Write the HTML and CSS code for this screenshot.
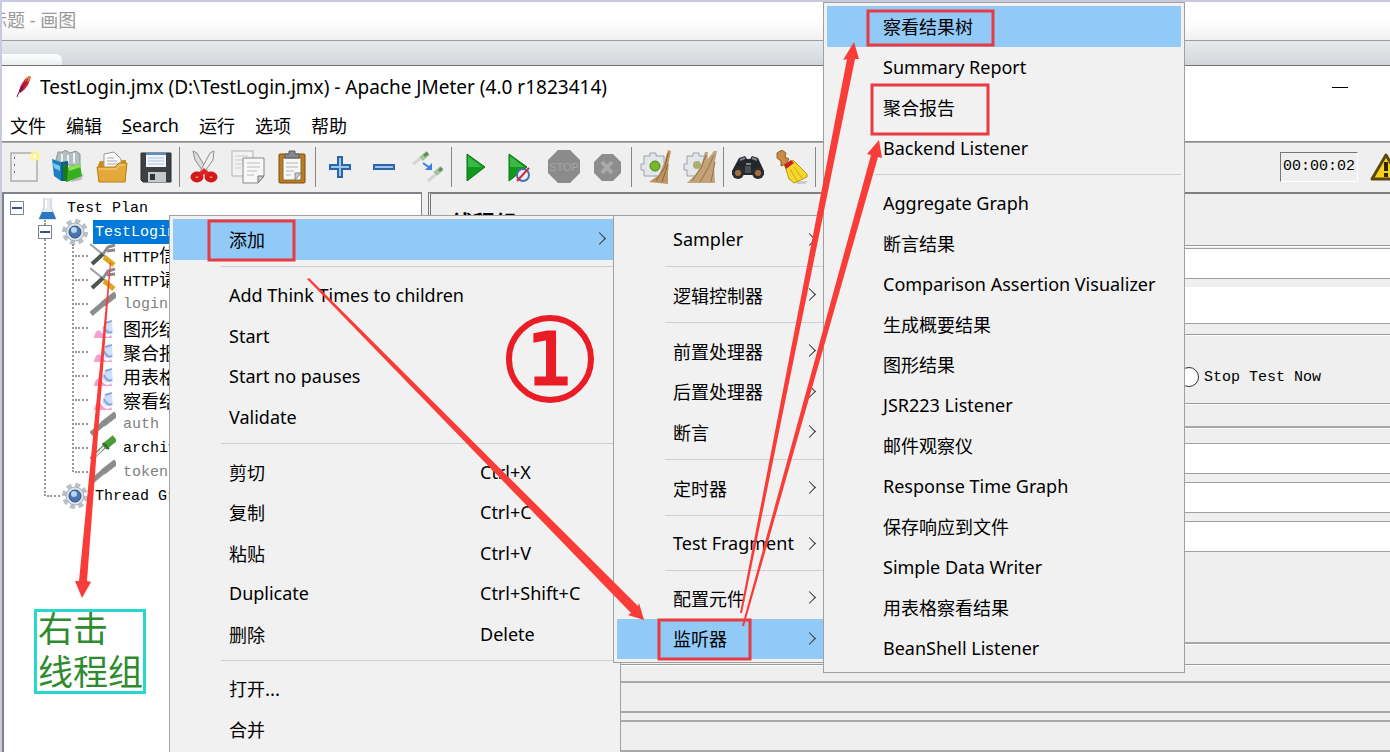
FILE: index.html
```
<!DOCTYPE html>
<html lang="zh-CN">
<head>
    <meta charset="UTF-8">
    <meta name="viewport" content="width=device-width, initial-scale=1.0">
    <title>TestLogin.jmx - Apache JMeter</title>
    <link rel="stylesheet" href="styles.css">
</head>
<body>
<div class="desktop">

    <!-- Paint window behind -->
    <div class="paint-title"><span>无标题 - 画图</span></div>
    <div class="paint-tabs"><div class="paint-tab"></div></div>

    <div class="title-bar">
        <svg class="feather" width="18" height="24" viewBox="0 0 18 24">
            <path d="M15 1 L17 2 L14 10 L10 15 L6 18 L5 16 L7 10 L11 4 Z" fill="#c8203c"/>
            <path d="M15 1 L17 2 L15 6 L11 7 L12 4 Z" fill="#e8863a"/>
            <path d="M7 11 L10 12 L6 18 L5 16 Z" fill="#7a1a5c"/>
            <path d="M14 4 L5 17 L3 22" stroke="#8c1030" fill="none"/>
        </svg>
        <h1>TestLogin.jmx (D:\TestLogin.jmx) - Apache JMeter (4.0 r1823414)</h1>
        <button class="minimize" aria-label="Minimize"></button>
    </div>

    <div class="menu-bar">
        <button class="cn">文件</button>
        <button class="cn">编辑</button>
        <button><u>S</u>earch</button>
        <button class="cn">运行</button>
        <button class="cn">选项</button>
        <button class="cn">帮助</button>
    </div>

    <div class="toolbar">
        <button aria-label="New"><svg viewBox="0 0 34 34">
            <rect x="4" y="3" width="26" height="28" fill="#f1f1f1" stroke="#8b8b8b"/>
            <path d="M7 8h1M7 15h1M7 22h1" stroke="#666" stroke-width="2"/>
            <circle cx="28" cy="6" r="5" fill="#fff68c" opacity=".9"/>
            <circle cx="28" cy="6" r="2" fill="#fffde0"/>
        </svg></button>
        <button aria-label="Templates"><svg viewBox="0 0 34 34">
            <path d="M22 28 L33 24 L30 30 L20 32 Z" fill="#bbb"/>
            <path d="M5 10 L7 2 L12 2 L14 0 L19 3 L25 1 L29 4 L29 16 L6 14 Z" fill="#b4bdc0" stroke="#8b979b"/>
            <path d="M11 4v10M17 5v8M23 3v10" stroke="#eef2f3" stroke-width="2"/>
            <path d="M1 9 L10 12 L10 31 L3 26 Z" fill="#1a7fc4"/>
            <path d="M10 12 L17 11 L17 31 L10 31 Z" fill="#0a5c98"/>
            <path d="M2 13 L9 16 L9 21 L3 18 Z" fill="#7cc7ee"/>
            <path d="M12 13 L17 17 L29 14 L31 26 L16 32 L12 28 Z" fill="#35ae20"/>
            <path d="M17 17 L29 14 L30 17 L18 21 Z" fill="#8ce05a"/>
            <path d="M12 13 L17 17 L16 32 L12 28 Z" fill="#1c7a12"/>
        </svg></button>
        <button aria-label="Open"><svg viewBox="0 0 34 34">
            <path d="M3 15 L5 11 L31 10 L31 31 L3 31 Z" fill="#c98d20"/>
            <path d="M9 4 L19 2 L26 9 L26 20 L9 20 Z" fill="#fafafa" stroke="#999"/>
            <path d="M12 8h7M12 11h10M12 14h11" stroke="#aaa"/>
            <path d="M2 17 L20 17 L24 13 L32 13 L30 32 L4 32 Z" fill="#e3a93b" stroke="#b87e18"/>
            <path d="M4 19h17l4-4h5" stroke="#f7d588" fill="none"/>
        </svg></button>
        <button aria-label="Save"><svg viewBox="0 0 34 34">
            <path d="M2 3h30v29H4l-2-2z" fill="#3d4045" stroke="#2a2c30"/>
            <rect x="7" y="3" width="20" height="14" fill="#f0f5fb"/>
            <rect x="7" y="3" width="20" height="2" fill="#5b8fc4"/>
            <path d="M9 8h16M9 11h16M9 14h16" stroke="#b4c3d2"/>
            <rect x="9" y="22" width="18" height="10" fill="#c6c8ca"/>
            <rect x="11" y="24" width="5" height="6" fill="#333"/>
        </svg></button>
        <span class="bar"></span>
        <button aria-label="Cut"><svg viewBox="0 0 34 34">
            <path d="M6 1 L10 3 L21 22 L18 24 L8 10 Z" fill="#dcdcdc" stroke="#8e8e8e"/>
            <path d="M27 1 L23 3 L13 22 L16 24 L26 10 Z" fill="#eee" stroke="#8e8e8e"/>
            <ellipse cx="10" cy="27" rx="4" ry="3" fill="#f0eaea" stroke="#d31818" stroke-width="5"/>
            <ellipse cx="24" cy="27" rx="4" ry="3" fill="#f0eaea" stroke="#d31818" stroke-width="5"/>
            <path d="M12 23 L17 18 L22 23 L19 27 L17 24 L15 27 Z" fill="#e02424"/>
        </svg></button>
        <button aria-label="Copy"><svg viewBox="0 0 34 34">
            <rect x="1" y="1" width="21" height="25" fill="#f2f2f2" stroke="#b3b3b3"/>
            <path d="M4 6h13M4 10h13M4 14h8M4 18h6" stroke="#ccc"/>
            <path d="M12 8h21v18l-6 7H12z" fill="#f7f7f7" stroke="#888"/>
            <path d="M16 13h13M16 17h13M16 21h10M16 25h7" stroke="#bbb"/>
            <path d="M33 26h-6v7z" fill="#ccc" stroke="#777"/>
        </svg></button>
        <button aria-label="Paste"><svg viewBox="0 0 34 34">
            <rect x="4" y="4" width="26" height="29" rx="1" fill="#b97c1f" stroke="#7c4f0e"/>
            <rect x="8" y="8" width="18" height="22" fill="#f7f7f7" stroke="#8a6a3a"/>
            <path d="M11 13h12M11 17h12M11 21h8M11 25h5" stroke="#b5b5b5"/>
            <path d="M26 23h-6v7z" fill="#ccc" stroke="#888"/>
            <path d="M10 8V4h4V1h6v3h4v4z" fill="#858a90" stroke="#555a60"/>
        </svg></button>
        <span class="bar"></span>
        <button aria-label="Expand all"><svg viewBox="0 0 34 34">
            <path d="M15 7h4v8h8v4h-8v8h-4v-8H7v-4h8z" fill="#9cc6f0" stroke="#2c64a4" stroke-width="2"/>
        </svg></button>
        <button aria-label="Collapse all"><svg viewBox="0 0 34 34">
            <rect x="7" y="15" width="20" height="4" fill="#9cc6f0" stroke="#2c64a4" stroke-width="2"/>
        </svg></button>
        <button aria-label="Toggle"><svg viewBox="0 0 34 34">
            <path d="M2 14 L10 8M17 31 L24 25" stroke="#d4d4d4" stroke-width="3"/>
            <path d="M10 9 L17 3M24 24 L31 18" stroke="#a3c79a" stroke-width="5"/>
            <path d="M13 6 L17 3M28 21 L31 18" stroke="#668c5c" stroke-width="3"/>
            <path d="M12 13 L19 18" stroke="#3a7fe0" stroke-width="2"/>
            <path d="M21 13v7h-7z" fill="#3a7fe0"/>
        </svg></button>
        <span class="bar"></span>
        <button aria-label="Start"><svg viewBox="0 0 34 34">
            <path d="M8 4 L26 17 L8 31 Z" fill="#0f9a1c" stroke="#0a7414"/>
            <path d="M9 6 L23 17 L9 17 Z" fill="#4fc45a" opacity=".7"/>
        </svg></button>
        <button aria-label="Start no pauses"><svg viewBox="0 0 34 34">
            <path d="M6 4 L24 17 L6 31 Z" fill="#0f9a1c" stroke="#0a7414"/>
            <path d="M7 6 L21 17 L7 17 Z" fill="#4fc45a" opacity=".7"/>
            <circle cx="20" cy="25" r="6" fill="#e9eef8" stroke="#4a6fb0" stroke-width="2"/>
            <path d="M14 31 L26 18" stroke="#d02a40" stroke-width="2"/>
        </svg></button>
        <button aria-label="Stop"><svg viewBox="0 0 34 34">
            <path d="M11 0h12l10 10v13l-10 10H11L1 23V10z" fill="#8b8b8b"/>
            <text x="17" y="21" class="stop-text">STOP</text>
        </svg></button>
        <button aria-label="Shutdown"><svg viewBox="0 0 34 34">
            <path d="M11 4h11l8 8v11l-8 8H11l-8-8V12z" fill="#8d8d8d"/>
            <path d="M11 12l10 11M21 12L11 23" stroke="#aaa" stroke-width="4"/>
        </svg></button>
        <span class="bar"></span>
        <button aria-label="Clear"><svg viewBox="0 0 34 34">
            <path d="M5 6h6V3h6v3h8v7h4v7h-4v6H5v-6H2v-6h3z" fill="#e3e6ea" stroke="#9aa0a8"/>
            <circle cx="16" cy="16" r="5" fill="#76b82a" stroke="#4d8513"/>
            <path d="M29 0 L32 1 L29 15 L29 34 L10 32 L20 25 L25 13 Z" fill="#bd9463"/>
            <path d="M29 3L26 17L17 31M29 14L23 32" stroke="#8a6236" fill="none"/>
        </svg></button>
        <button aria-label="Clear all"><svg viewBox="0 0 34 34">
            <path d="M4 6h6V3h6v3h8v7h4v7h-4v6H4v-6H1v-6h3z" fill="#e3e6ea" stroke="#9aa0a8"/>
            <circle cx="14" cy="15" r="4" fill="#a9b06a"/>
            <path d="M22 2h3l-1 8 7-9h3l-3 15 1 17H4l8-8 6-9z" fill="#c3a27a"/>
            <path d="M23 5L18 18L9 31M31 5L24 20L17 32M32 12L28 32" stroke="#93714a" fill="none"/>
        </svg></button>
        <span class="bar"></span>
        <button aria-label="Search"><svg viewBox="0 0 34 34">
            <path d="M8 8l6-2 2 3h3l2-3 6 2 6 13v4H1v-4z" fill="#23272c"/>
            <path d="M9 10l5-2M21 8l5 2M15 14h5" stroke="#7c848c" stroke-width="2"/>
            <circle cx="7" cy="23" r="6" fill="#2a2d31"/>
            <circle cx="27" cy="23" r="6" fill="#2a2d31"/>
            <circle cx="7" cy="23" r="3" fill="#a8703c"/>
            <circle cx="27" cy="23" r="3" fill="#a8703c"/>
            <rect x="14" y="16" width="6" height="7" fill="#4a5058"/>
        </svg></button>
        <button aria-label="Reset search"><svg viewBox="0 0 34 34">
            <path d="M20 31h13l-3 3H22z" fill="#ccc"/>
            <path d="M2 3 L7 0 L11 3 L10 7 L14 9 L11 14 L6 16 L6 11 L2 8 Z" fill="#c98c44" stroke="#94601f"/>
            <path d="M10 16 L18 10 L32 24 L32 27 L19 33 L14 29 Z" fill="#f5d72e" stroke="#b99510"/>
            <path d="M9 15 L16 10 L19 13 L11 19 Z" fill="#cc2020"/>
            <path d="M15 19l7 12M19 17l8 11" stroke="#d0a818"/>
        </svg></button>
        <span class="bar"></span>
        <div class="status">
            <span class="timer">00:00:02</span>
            <svg class="warning" viewBox="0 0 32 28">
                <path d="M16 2 L30 26 H2 Z" fill="#fbd116" stroke="#59480a" stroke-width="3" stroke-linejoin="round"/>
                <path d="M16 9v9M16 20v4" stroke="#2c2506" stroke-width="4"/>
            </svg>
        </div>
    </div>

    <div class="split">
        <!-- Test plan tree -->
        <div class="tree">
            <ul>
                <li>
                    <div class="row">
                        <span class="lead"><button class="expander" aria-label="Collapse"></button></span>
                        <svg class="icon" viewBox="0 0 26 26">
                            <path d="M10 2h7v10l5 12H5l5-12z" fill="#e6ebf0" stroke="#c0c8d0"/>
                            <path d="M8 17h11l3 7H5z" fill="#2a78c2"/>
                            <path d="M9 2h9M12 5v8" stroke="#fff" stroke-width="2"/>
                        </svg>
                        <span class="label">Test Plan</span>
                    </div>
                    <ul class="children">
                        <li>
                            <div class="row">
                                <span class="lead"><button class="expander" aria-label="Collapse"></button></span>
                                <svg class="icon"><use href="#gear"/></svg>
                                <span class="label selected">TestLogin</span>
                            </div>
                            <ul class="children">
                                <li class="row"><span class="lead stub"></span><svg class="icon"><use href="#tools"/></svg><span class="label">HTTP<span class="cn">信息头</span></span></li>
                                <li class="row"><span class="lead stub"></span><svg class="icon"><use href="#tools"/></svg><span class="label">HTTP<span class="cn">请求</span></span></li>
                                <li class="row"><span class="lead stub"></span><svg class="icon"><use href="#dropper-off"/></svg><span class="label off">login</span></li>
                                <li class="row"><span class="lead stub"></span><svg class="icon"><use href="#chart"/></svg><span class="label cn">图形结果</span></li>
                                <li class="row"><span class="lead stub"></span><svg class="icon"><use href="#chart"/></svg><span class="label cn">聚合报告</span></li>
                                <li class="row"><span class="lead stub"></span><svg class="icon"><use href="#chart"/></svg><span class="label cn">用表格察看</span></li>
                                <li class="row"><span class="lead stub"></span><svg class="icon"><use href="#chart"/></svg><span class="label cn">察看结果树</span></li>
                                <li class="row"><span class="lead stub"></span><svg class="icon"><use href="#dropper-off"/></svg><span class="label off">auth</span></li>
                                <li class="row"><span class="lead stub"></span><svg class="icon"><use href="#dropper"/></svg><span class="label">archive</span></li>
                                <li class="row"><span class="lead stub"></span><svg class="icon"><use href="#dropper-off"/></svg><span class="label off">token</span></li>
                            </ul>
                        </li>
                        <li class="row">
                            <span class="lead stub"></span>
                            <svg class="icon"><use href="#gear"/></svg>
                            <span class="label">Thread Group</span>
                        </li>
                    </ul>
                </li>
            </ul>
        </div>

        <!-- Thread group editor -->
        <form class="editor">
            <h2>线程组</h2>
            <input type="text" class="name-field" aria-label="名称">
            <textarea class="comment-field" aria-label="注释"></textarea>
            <div class="action-group">
                <label><input type="radio" name="on-error"> Stop Test Now</label>
            </div>
            <div class="props">
                <input type="text" aria-label="线程数">
                <input type="text" aria-label="Ramp-Up Period">
                <input type="text" class="loops" aria-label="循环次数">
            </div>
            <div class="scheduler"></div>
            <div class="panel-box"></div>
            <div class="panel-box"></div>
        </form>
    </div>

    <!-- Context menu -->
    <ul class="menu menu-main">
        <li><button class="cn active">添加<i class="arrow"></i></button></li>
        <li class="separator"></li>
        <li><button>Add Think Times to children</button></li>
        <li><button>Start</button></li>
        <li><button>Start no pauses</button></li>
        <li><button>Validate</button></li>
        <li class="separator"></li>
        <li><button><span class="cn">剪切</span><kbd>Ctrl+X</kbd></button></li>
        <li><button><span class="cn">复制</span><kbd>Ctrl+C</kbd></button></li>
        <li><button><span class="cn">粘贴</span><kbd>Ctrl+V</kbd></button></li>
        <li><button>Duplicate<kbd>Ctrl+Shift+C</kbd></button></li>
        <li><button><span class="cn">删除</span><kbd>Delete</kbd></button></li>
        <li class="separator"></li>
        <li><button class="cn">打开...</button></li>
        <li><button class="cn">合并</button></li>
    </ul>

    <ul class="menu menu-add">
        <li><button>Sampler<i class="arrow"></i></button></li>
        <li class="separator"></li>
        <li><button class="cn">逻辑控制器<i class="arrow"></i></button></li>
        <li class="separator"></li>
        <li><button class="cn">前置处理器<i class="arrow"></i></button></li>
        <li><button class="cn">后置处理器<i class="arrow"></i></button></li>
        <li><button class="cn">断言<i class="arrow"></i></button></li>
        <li class="separator"></li>
        <li><button class="cn">定时器<i class="arrow"></i></button></li>
        <li class="separator"></li>
        <li><button>Test Fragment<i class="arrow"></i></button></li>
        <li class="separator"></li>
        <li><button class="cn">配置元件<i class="arrow"></i></button></li>
        <li><button class="cn active">监听器<i class="arrow"></i></button></li>
    </ul>

    <ul class="menu menu-listener">
        <li><button class="cn active">察看结果树</button></li>
        <li><button>Summary Report</button></li>
        <li><button class="cn">聚合报告</button></li>
        <li><button>Backend Listener</button></li>
        <li class="separator"></li>
        <li><button>Aggregate Graph</button></li>
        <li><button class="cn">断言结果</button></li>
        <li><button>Comparison Assertion Visualizer</button></li>
        <li><button class="cn">生成概要结果</button></li>
        <li><button class="cn">图形结果</button></li>
        <li><button>JSR223 Listener</button></li>
        <li><button class="cn">邮件观察仪</button></li>
        <li><button>Response Time Graph</button></li>
        <li><button class="cn">保存响应到文件</button></li>
        <li><button>Simple Data Writer</button></li>
        <li><button class="cn">用表格察看结果</button></li>
        <li><button>BeanShell Listener</button></li>
    </ul>

    <!-- Hand drawn notes -->
    <div class="note"><p>右击<br>线程组</p></div>
    <svg class="marks" width="1390" height="752" viewBox="0 0 1390 752">
        <g fill="none" stroke="#e83a42" stroke-width="3">
            <rect x="209" y="221" width="85" height="39"/>
            <rect x="659" y="620" width="91" height="39"/>
            <rect x="868" y="11" width="125" height="34"/>
            <rect x="872" y="85" width="116" height="49"/>
        </g>
        <g fill="#fa3c38">
            <path d="M307 279 L309 278 L638 606 L639 603 L644 620 L628 615 L631 613 Z"/>
            <path d="M110 262 L111 262 L87 581 L91 582 L82 598 L75 581 L79 581 Z"/>
            <path d="M740 613 L847 59 L843 60 L854 42 L859 59 L855 59 L742 613 Z"/>
            <path d="M742 626 L871 155 L867 154 L879 140 L882 158 L878 157 L744 626 Z"/>
        </g>
        <circle cx="550" cy="359" r="41" fill="none" stroke="#ea1c25" stroke-width="6"/>
        <text x="550" y="384" class="step">1</text>
    </svg>
</div>

<svg class="defs" width="0" height="0">
    <symbol id="gear" viewBox="0 0 26 26">
        <circle cx="13" cy="13" r="11" fill="none" stroke="#b9c0c8" stroke-width="4" stroke-dasharray="5 3.6"/>
        <circle cx="13" cy="13" r="9" fill="#dde2e8" stroke="#a5adb7"/>
        <circle cx="13" cy="13" r="6" fill="#4a75b0" stroke="#2d4d80"/>
        <circle cx="12" cy="11" r="3" fill="#b5d6f5"/>
    </symbol>
    <symbol id="tools" viewBox="0 0 26 26">
        <path d="M0 1 L16 14" stroke="#98a0a6" stroke-width="2"/>
        <path d="M14 14 L24 22" stroke="#dda91c" stroke-width="5"/>
        <path d="M2 21 L13 11" stroke="#4c5650" stroke-width="4"/>
        <path d="M13 11 L18 4 L25 2 M17 8 L25 7" stroke="#8d8890" stroke-width="3" fill="none"/>
    </symbol>
    <symbol id="dropper" viewBox="0 0 26 26">
        <path d="M1 24 L15 11" stroke="#777" stroke-width="4"/>
        <path d="M4 22 L14 12" stroke="#eee" stroke-width="2"/>
        <path d="M14 12 L25 3" stroke="#4d9a3a" stroke-width="7"/>
        <path d="M13 8 L19 14" stroke="#2f6d24" stroke-width="2"/>
    </symbol>
    <symbol id="dropper-off" viewBox="0 0 26 26">
        <path d="M1 23 L14 12" stroke="#8c8c8c" stroke-width="5"/>
        <path d="M13 13 L26 3" stroke="#8c8c8c" stroke-width="6"/>
    </symbol>
    <symbol id="chart" viewBox="0 0 26 26">
        <path d="M4 22 Q7 11 12 18 T21 20 L22 23 H4 Z" fill="#f2a0cf"/>
        <path d="M12 15 Q14 4 22 8 L23 18 Q15 22 12 15 Z" fill="#cfe0fa"/>
        <path d="M14 12 Q17 19 22 17M15 8 L22 6" stroke="#8ba6e2" fill="none" stroke-width="2"/>
    </symbol>
</svg>
</body>
</html>
```
FILE: styles.css
```
* {
    box-sizing: border-box;
}
body {
    margin: 0;
    font-family: "Noto Sans", "Noto Sans CJK SC", sans-serif;
    font-size: 18px;
    color: #000;
    overflow: hidden;
}
button {
    border: 0;
    padding: 0;
    background: none;
    font: inherit;
    color: inherit;
}
ul {
    list-style: none;
    margin: 0;
    padding: 0;
}
.cn {
    font-family: "Noto Sans CJK SC", sans-serif;
    font-size: 18px;
}
.desktop {
    position: relative;
    display: flex;
    flex-direction: column;
    height: 100vh;
    border-left: 2px solid #c8cae2;
    border-top: 2px solid #c8cae2;
    overflow: hidden;
    background: #fff;
}

/* paint window */
.paint-title {
    flex: none;
    height: 39px;
    line-height: 36px;
    text-indent: -31px;
    overflow: hidden;
    color: #999;
    background: linear-gradient(#fff 50%, #f0f0f2);
    border-bottom: 1px solid #9b9da0;
}
.paint-tabs {
    flex: none;
    display: flex;
    align-items: flex-end;
    height: 25px;
    background: linear-gradient(#e7eaec, #d3d7db);
    border-bottom: 1px solid #707274;
}
.paint-tab {
    width: 60px;
    height: 11px;
    background: linear-gradient(#fff, #eceef0);
    border-top-right-radius: 6px;
}

/* jmeter window */
.title-bar {
    flex: none;
    display: flex;
    align-items: center;
    height: 42px;
    padding: 0 42px 0 12px;
}
.feather {
    margin-right: 8px;
}
.title-bar h1 {
    margin: 0;
    font-size: 19px;
    line-height: 24px;
    font-weight: normal;
}
.minimize {
    width: 16px;
    height: 1px;
    margin-left: auto;
    background: #000;
}
.menu-bar {
    flex: none;
    display: flex;
    gap: 20px;
    height: 34px;
    padding: 0 8px;
    border-bottom: 1px solid #8c8c8c;
}
.toolbar {
    flex: none;
    display: flex;
    align-items: center;
    height: 50px;
    padding-bottom: 2px;
    background: #efefef;
    border-top: 1px solid #aaa;
}
.toolbar button {
    flex: none;
    width: 44px;
    height: 34px;
}
.toolbar button svg {
    display: block;
    width: 34px;
    height: 34px;
    margin: 0 auto;
}
.stop-text {
    font: 11px "Liberation Sans", sans-serif;
    text-anchor: middle;
    fill: #a6a6a6;
}
.bar {
    flex: none;
    width: 1px;
    height: 40px;
    margin: 0 2px 0 1px;
    background: #888;
}
.status {
    display: flex;
    align-items: center;
    gap: 12px;
    margin-left: auto;
    margin-right: -12px;
}
.timer {
    padding: 0 2px;
    border-top: 1px solid #777;
    border-left: 1px solid #777;
    border-right: 1px solid #fff;
    border-bottom: 1px solid #fff;
    font: 15px/28px "Liberation Mono", monospace;
}
.warning {
    width: 32px;
    height: 28px;
}
.split {
    flex: 1;
    display: flex;
    gap: 6px;
    min-height: 0;
    background: #efefef;
}

/* tree */
.tree {
    flex: none;
    width: 420px;
    padding: 2px 0 0 6px;
    background: #fff;
    border: 2px solid #808489;
    border-right-width: 1px;
    border-bottom: 0;
    font: 15px "Liberation Mono", monospace;
}
.row {
    display: flex;
    align-items: center;
    height: 24px;
    white-space: nowrap;
}
.children {
    position: relative;
    padding-left: 28px;
}
.children::before {
    content: "";
    position: absolute;
    left: 34px;
    top: 0;
    bottom: 12px;
    border-left: 2px dotted #999;
}
.lead {
    position: relative;
    width: 24px;
}
.stub::before {
    content: "";
    display: block;
    width: 13px;
    margin-left: 9px;
    border-top: 2px dotted #999;
}
.expander {
    display: block;
    width: 14px;
    height: 14px;
    border: 1px solid #7b8494;
    background: linear-gradient(#3b4f88, #3b4f88) center / 10px 2px no-repeat #fff;
}
.icon {
    width: 26px;
    height: 26px;
}
.label {
    margin-left: 5px;
    padding: 1px 2px 0;
    line-height: 23px;
}
.label.cn {
    padding-top: 0;
}
.selected {
    background: #0078d7;
    color: #fff;
}
.off {
    color: #808080;
}

/* editor */
.editor {
    flex: 1;
    display: flex;
    flex-direction: column;
    min-width: 0;
    border-top: 2px solid #808080;
    border-left: 3px double #777;
    font: 15px "Liberation Mono", monospace;
}
.editor h2 {
    flex: none;
    height: 52px;
    margin: 0 0 2px;
    padding: 11px 0 0 20px;
    font: bold 22px "Noto Sans CJK SC", sans-serif;
    border-bottom: 1px solid #999;
    box-shadow: 0 1px #fff;
}
.editor input[type="text"],
.editor textarea {
    flex: none;
    display: block;
    width: 100%;
    height: 31px;
    margin: 0;
    padding: 0;
    border: 1px solid #a0a0a0;
    border-width: 1px 0 1px 1px;
    background: #fff;
    resize: none;
}
.editor .comment-field {
    height: 37px;
    margin-top: 8px;
    border-top-color: #fff;
}
.editor .loops {
    height: 34px;
}
.action-group {
    flex: none;
    display: flex;
    align-items: center;
    height: 70px;
    margin-top: 10px;
    padding: 16px 0 0 747px;
    border: 1px solid #999;
    border-right: 0;
    box-shadow: inset 0 1px #fff, 0 1px #fff;
}
.action-group label {
    display: flex;
    align-items: center;
    gap: 5px;
    white-space: nowrap;
}
.action-group input {
    appearance: none;
    width: 20px;
    height: 20px;
    margin: 0;
    border: 1px solid #333;
    border-radius: 50%;
    background: #fff;
}
.props {
    flex: none;
    display: flex;
    flex-direction: column;
    gap: 8px;
    height: 218px;
    margin-top: 22px;
    padding-top: 15px;
    border: 2px solid #a8a8a8;
    border-right: 0;
    box-shadow: inset 0 1px #fff, 0 1px #fff;
}
.scheduler {
    flex: none;
    height: 21px;
    border-bottom: 1px solid #999;
    box-shadow: 0 1px #fff;
}
.panel-box {
    flex: none;
    height: 32px;
    margin-top: 7px;
    border: 2px solid #a8a8a8;
    border-right: 0;
}
.scheduler + .panel-box {
    margin-top: 16px;
}

/* popup menus */
.menu {
    position: absolute;
    padding: 3px;
    background: #f1f1f1;
    border: 1px solid #a0a0a0;
}
.menu li {
    height: 41px;
}
.menu li:nth-child(even) {
    height: 40px;
}
.menu li.separator {
    height: 15px;
    padding: 6px 0 0 48px;
}
.separator::before {
    content: "";
    display: block;
    border-top: 1px solid #cfcfcf;
}
.menu button {
    display: flex;
    align-items: center;
    width: 100%;
    height: 100%;
    padding: 0 0 1px 56px;
    text-align: left;
    white-space: nowrap;
}
.menu button.cn {
    padding-bottom: 2px;
}
.menu .active {
    background: #91c9f7;
}
.menu kbd {
    width: 137px;
    margin-left: auto;
    font: inherit;
}
.arrow {
    width: 9px;
    height: 9px;
    margin: 0 13px 0 auto;
    border-top: 1px solid #333;
    border-right: 1px solid #333;
    transform: rotate(45deg);
}
.menu-main {
    left: 167px;
    top: 213px;
    width: 452px;
}
.menu-add {
    left: 611px;
    top: 213px;
    width: 218px;
}
.menu-add li.separator:nth-child(n+10) {
    height: 14px;
}
.menu-listener {
    left: 821px;
    top: 0;
    width: 362px;
}

/* notes drawn on top */
.note {
    position: absolute;
    left: 32px;
    top: 607px;
    width: 112px;
    border: 3px solid #27d9cc;
    color: #2e8b2e;
    font: 35px/43px "Noto Sans CJK SC", sans-serif;
    white-space: nowrap;
}
.note p {
    margin: -7px 0 0 1px;
}
.marks {
    position: absolute;
    left: -2px;
    top: -2px;
    pointer-events: none;
}
.step {
    font: 72px "DejaVu Sans", sans-serif;
    text-anchor: middle;
    fill: #ea1c25;
    stroke: #ea1c25;
    stroke-width: 3px;
}
.defs {
    position: absolute;
}
```
